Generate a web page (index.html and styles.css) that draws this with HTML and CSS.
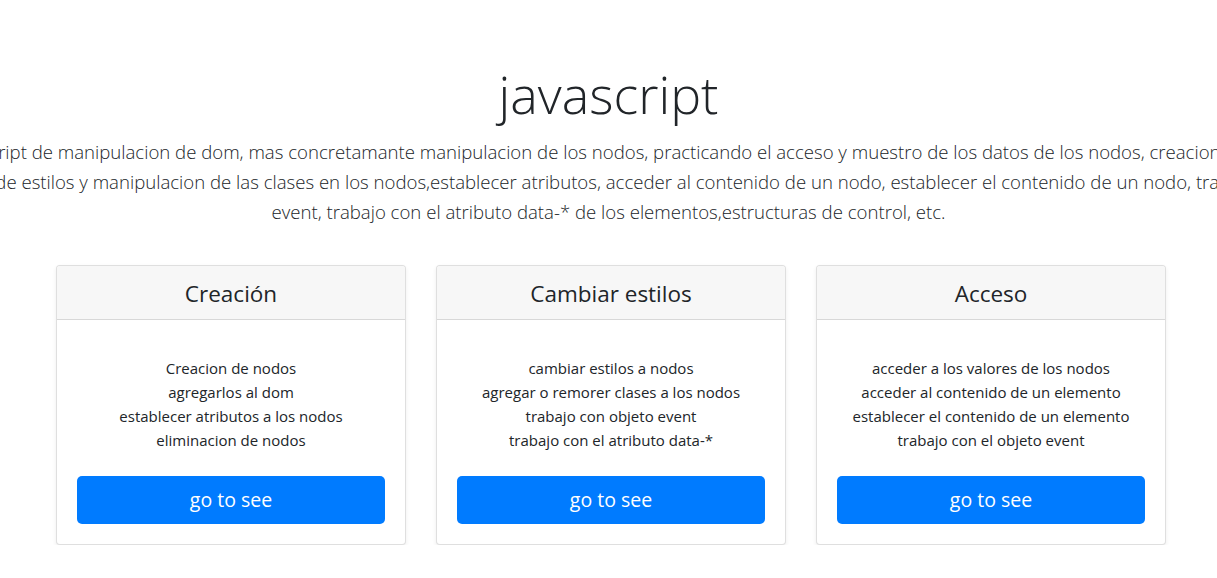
FILE: index.html
```html
<!DOCTYPE html>
<html lang="es">
<head>
<meta charset="utf-8">
<title>javascript</title>
<link rel="stylesheet" href="styles.css">
</head>
<body>
<header class="hero">
  <h1 class="hero-title">javascript</h1>
  <p class="lead">
    <span class="lead-line">Un script de manipulacion de dom, mas concretamante manipulacion de los nodos, practicando el acceso y muestro de los datos de los nodos, creacion de la</span>
    <span class="lead-line">nodos, cambio de estilos y manipulacion de las clases en los nodos,establecer atributos, acceder al contenido de un nodo, establecer el contenido de un nodo, trabajo con objeto</span>
    <span class="lead-line">event, trabajo con el atributo data-* de los elementos,estructuras de control, etc.</span>
  </p>
</header>
<main class="cards">
  <section class="card">
    <h4 class="card-header">Creación</h4>
    <div class="card-body">
      <p class="card-text">Creacion de nodos<br>agregarlos al dom<br>establecer atributos a los nodos<br>eliminacion de nodos</p>
      <a class="btn" href="#">go to see</a>
    </div>
  </section>
  <section class="card">
    <h4 class="card-header">Cambiar estilos</h4>
    <div class="card-body">
      <p class="card-text">cambiar estilos a nodos<br>agregar o remorer clases a los nodos<br>trabajo con objeto event<br>trabajo con el atributo data-*</p>
      <a class="btn" href="#">go to see</a>
    </div>
  </section>
  <section class="card">
    <h4 class="card-header">Acceso</h4>
    <div class="card-body">
      <p class="card-text">acceder a los valores de los nodos<br>acceder al contenido de un elemento<br>establecer el contenido de un elemento<br>trabajo con el objeto event</p>
      <a class="btn" href="#">go to see</a>
    </div>
  </section>
</main>
</body>
</html>
```
FILE: styles.css
```css
html, body {
  margin: 0;
  padding: 0;
  background: #fff;
  overflow-x: hidden;
}
body {
  font-family: "Open Sans", "Noto Sans", "Liberation Sans", sans-serif;
  color: #212529;
  font-size: 15px;
  line-height: 1.5;
}
.hero {
  display: flex;
  flex-direction: column;
  align-items: center;
  padding-top: 60px;
}
.hero-title {
  margin: 0 0 10px;
  font-size: 52px;
  font-weight: 300;
  line-height: 67px;
}
.lead {
  margin: 0;
  display: flex;
  flex-direction: column;
  align-items: center;
  font-size: 18.6px;
  font-weight: 300;
  line-height: 30px;
}
.lead-line {
  white-space: nowrap;
}
.cards {
  display: flex;
  gap: 30px;
  padding: 38px 0 0 56px;
}
.card {
  width: 350px;
  box-sizing: border-box;
  border: 1px solid rgba(0, 0, 0, 0.125);
  border-radius: 4px;
  box-shadow: 0 2px 4px rgba(0, 0, 0, 0.075);
  background: #fff;
  display: flex;
  flex-direction: column;
}
.card-header {
  margin: 0;
  padding: 14px 20px 11px;
  background: #f7f7f7;
  border-bottom: 1px solid rgba(0, 0, 0, 0.125);
  border-radius: 3px 3px 0 0;
  font-size: 22.5px;
  font-weight: 400;
  line-height: 28px;
  text-align: center;
}
.card-body {
  padding: 36px 20px 20px;
  display: flex;
  flex-direction: column;
  align-items: stretch;
}
.card-text {
  margin: 0 0 24px;
  text-align: center;
  font-size: 15px;
  line-height: 24px;
}
.btn {
  display: block;
  background: #007bff;
  color: #fff;
  text-decoration: none;
  text-align: center;
  font-size: 19.5px;
  line-height: 30px;
  padding: 9px 16px;
  border-radius: 5px;
}
```
